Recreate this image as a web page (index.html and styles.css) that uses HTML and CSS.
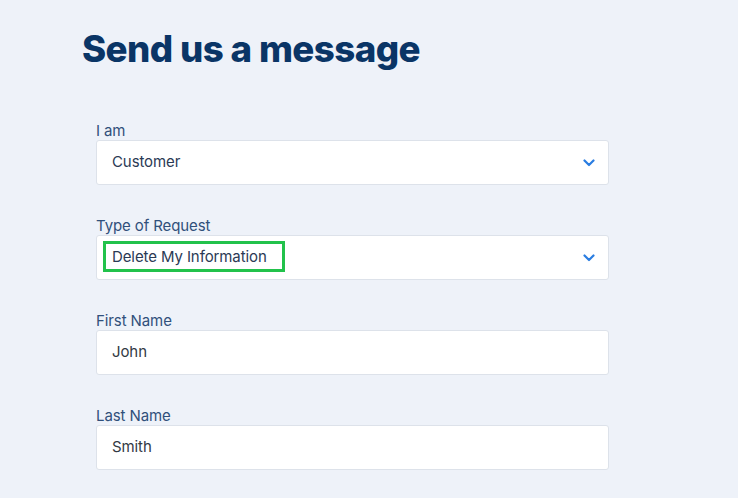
FILE: index.html
```html
<!DOCTYPE html>
<html lang="en">
<head>
<meta charset="utf-8">
<title>Send us a message</title>
<link rel="stylesheet" href="styles.css">
</head>
<body>
<main class="page">
  <h1 class="title">Send us a message</h1>
  <form class="form">
    <div class="field">
      <label class="label">I am</label>
      <div class="control select">
        <span class="value">Customer</span>
        <svg class="chev" width="12" height="8" viewBox="0 0 12 8"><path d="M1.5 1.5 L6 6 L10.5 1.5" fill="none" stroke="#2a7de1" stroke-width="2.2" stroke-linecap="round" stroke-linejoin="round"/></svg>
      </div>
    </div>
    <div class="field">
      <label class="label">Type of Request</label>
      <div class="control select">
        <span class="value highlighted">Delete My Information</span>
        <svg class="chev" width="12" height="8" viewBox="0 0 12 8"><path d="M1.5 1.5 L6 6 L10.5 1.5" fill="none" stroke="#2a7de1" stroke-width="2.2" stroke-linecap="round" stroke-linejoin="round"/></svg>
      </div>
    </div>
    <div class="field">
      <label class="label">First Name</label>
      <div class="control input"><span class="value">John</span></div>
    </div>
    <div class="field">
      <label class="label">Last Name</label>
      <div class="control input"><span class="value">Smith</span></div>
    </div>
  </form>
</main>
</body>
</html>
```
FILE: styles.css
```css
html, body {
  margin: 0;
  padding: 0;
  background: #eef2f9;
}
body {
  font-family: Inter, "Noto Sans", Arial, sans-serif;
  width: 738px;
  height: 498px;
  overflow: hidden;
}
.page {
  padding: 26px 0 0 82px;
}
.title {
  margin: 0;
  font-size: 36.7px;
  line-height: 46px;
  font-weight: 800;
  color: #0a3566;
  letter-spacing: -0.6px;
}
.form {
  display: flex;
  flex-direction: column;
  gap: 28px;
  margin: 46px 0 0 14px;
  width: 513px;
}
.field {
  display: flex;
  flex-direction: column;
}
.label {
  font-size: 15px;
  line-height: 19px;
  padding-top: 3px;
  color: #31507b;
  letter-spacing: -0.1px;
}
.control {
  position: relative;
  box-sizing: border-box;
  height: 45px;
  background: #ffffff;
  border: 1px solid #dde2ea;
  border-radius: 3px;
  display: flex;
  align-items: center;
  justify-content: space-between;
  padding: 0 13px 0 15px;
}
.value {
  font-size: 15px;
  line-height: 18px;
  color: #2b3a55;
  letter-spacing: -0.1px;
  margin-top: -1px;
}
.input .value {
  color: #333a44;
}
.highlighted {
  position: relative;
}
.highlighted::before {
  content: "";
  position: absolute;
  left: -9px;
  right: -18px;
  top: -7px;
  bottom: -6px;
  border: 3px solid #22c24b;
}
.chev {
  display: block;
}
```
